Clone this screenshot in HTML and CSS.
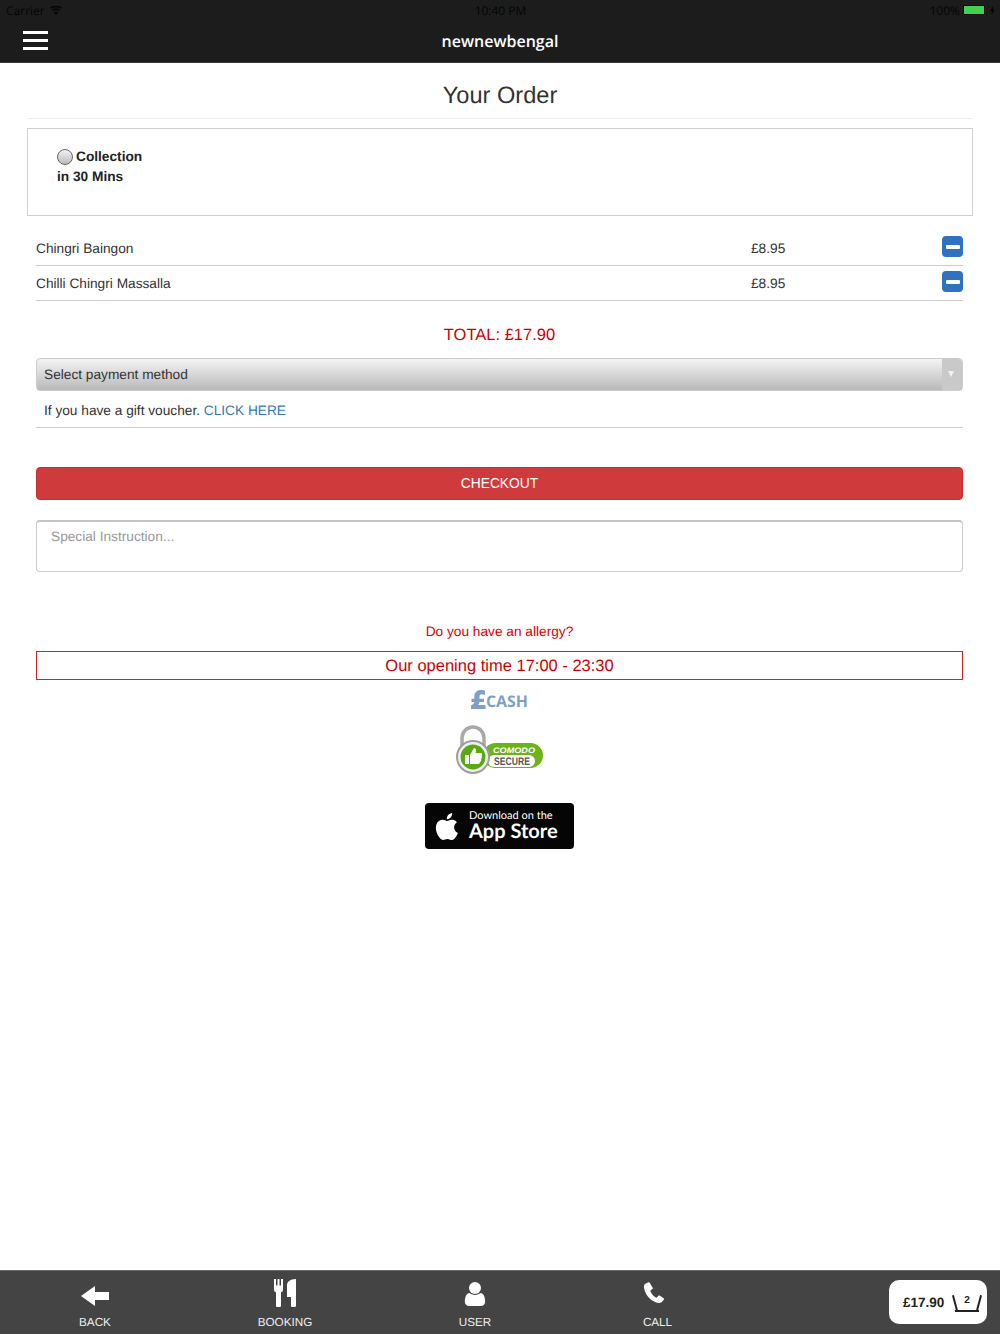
FILE: index.html
```html
<!DOCTYPE html>
<html lang="en">
  <head>
    <meta charset="UTF-8">
    <meta name="viewport" content="width=device-width, initial-scale=1.0">
    <title>Your Order</title>
    <link rel="stylesheet" href="styles.css">
  </head>
  <body>
    <div class="app">
      <div class="top">
        <div class="status">
          <div class="status-left">
            <span>Carrier</span>
            <svg class="wifi" width="12" height="9" viewBox="0 0 12 9">
              <path d="M6 9 3.900 6.400a3.200 3.200 0 0 1 4.200 0zM2.900 5.200 1.900 4a6.300 6.300 0 0 1 8.200 0l-1 1.200a4.800 4.800 0 0 0-6.200 0zM1 3 0 1.900a9.200 9.200 0 0 1 12 0L11 3a7.700 7.700 0 0 0-10 0z" fill="#050505"/>
            </svg>
          </div>
          <span class="status-time">10:40 PM</span>
          <div class="status-right">
            <span>100%</span>
            <span class="battery"></span>
            <svg class="bolt" width="5" height="9" viewBox="0 0 5 9"><path d="M3 0 0 5h2L1.500 9 5 3.600H3z" fill="#050505"/></svg>
          </div>
        </div>
        <div class="nav">
          <div class="burger"><span></span><span></span><span></span></div>
          <div class="brand">newnewbengal</div>
        </div>
      </div>

      <div class="main">
        <h1 class="title">Your Order</h1>

        <div class="collect">
          <div class="collect-line"><span class="radio"></span>Collection</div>
          <div class="collect-line">in 30 Mins</div>
        </div>

        <div class="content">
          <div class="item">
            <span class="item-name">Chingri Baingon</span>
            <span class="item-price">£8.95</span>
            <span class="minus"></span>
          </div>
          <div class="item">
            <span class="item-name">Chilli Chingri Massalla</span>
            <span class="item-price">£8.95</span>
            <span class="minus"></span>
          </div>

          <div class="total">TOTAL: £17.90</div>

          <div class="select">
            <span>Select payment method</span>
            <span class="select-arrow"></span>
          </div>
          <div class="voucher">If you have a gift voucher. <a href="#">CLICK HERE</a></div>

          <button class="checkout">CHECKOUT</button>

          <div class="instruction">Special Instruction...</div>

          <div class="allergy">Do you have an allergy?</div>
          <div class="opening">Our opening time 17:00 - 23:30</div>

          <div class="badges">
            <svg class="cash" width="60" height="22" viewBox="0 0 60 22">
              <path d="M1 20v-3.500c2-1 3-2 3.300-3.500H1.500V9.800h2.800V7.500C4.300 3 7.500 1 11 1c1.500 0 3 .3 4 .8v4.400c-1-.6-2-.9-3-.9-1.500 0-2.500.8-2.500 2.300v2.200H14V13H9.500c-.2 1.300-.8 2.400-1.600 3h7.600v4z" fill="#7f9fc4"/>
              <text x="16" y="18" class="cash-text" textLength="42" lengthAdjust="spacingAndGlyphs">CASH</text>
            </svg>

            <svg class="comodo" width="90" height="52" viewBox="0 0 90 52">
              <path d="M7 24V13a11 11 0 0 1 22 0v11" fill="none" stroke="#a9a9a9" stroke-width="3.500"/>
              <rect x="28" y="18" width="60" height="25" rx="12.500" fill="#6cb21a"/>
              <rect x="33" y="30" width="47" height="12" rx="6" fill="#fff"/>
              <text x="38" y="28" class="comodo-top" textLength="42" lengthAdjust="spacingAndGlyphs">COMODO</text>
              <text x="39" y="40" class="comodo-bottom" textLength="36" lengthAdjust="spacingAndGlyphs">SECURE</text>
              <circle cx="18" cy="32" r="17" fill="#9c9c9c"/>
              <circle cx="18" cy="32" r="15" fill="#f1f1f1"/>
              <circle cx="18" cy="32" r="12.500" fill="#5aa813"/>
              <path d="M10 30h4v9h-4zM15 30l4-7c2 0 2.500 2 1.500 5H26c1.500 0 1.500 2.500.5 3 .7 1 .5 2.500-.5 3 .5 1 .2 2.500-1 3 0 1-.7 2-2 2h-8z" fill="#fff"/>
            </svg>

            <div class="store">
              <svg width="28" height="33" viewBox="0 0 26 31">
                <path d="M21.600 16.400c0-3.200 2.600-4.700 2.700-4.800-1.500-2.200-3.800-2.500-4.600-2.500-2-.2-3.800 1.200-4.800 1.200s-2.500-1.200-4.200-1.100c-2.100 0-4.100 1.200-5.200 3.100-2.200 3.900-.6 9.600 1.600 12.700 1.100 1.500 2.300 3.200 4 3.200 1.600-.1 2.200-1 4.100-1s2.500 1 4.200 1c1.700-.1 2.800-1.600 3.900-3.100 1.200-1.800 1.700-3.500 1.800-3.600-.1 0-3.400-1.300-3.500-5.100zM18.400 6.900c.9-1.100 1.500-2.600 1.300-4.100-1.300.1-2.800.9-3.700 2-.8.9-1.500 2.500-1.300 3.900 1.400.1 2.800-.7 3.700-1.800z" fill="#fff"/>
              </svg>
              <div class="store-text">
                <span class="store-small">Download on the</span>
                <span class="store-big">App Store</span>
              </div>
            </div>
          </div>
        </div>
      </div>

      <div class="bottom">
        <a class="tab tab-back" href="#">
          <svg width="28" height="20" viewBox="0 0 28 20"><path d="M0 10 14 0v6h14v8H14v6z" fill="#fff"/></svg>
          <span>BACK</span>
        </a>
        <a class="tab tab-booking" href="#">
          <svg width="22" height="28" viewBox="0 0 22 28">
            <path d="M0 0h2v6.500h1.500V0h2v6.500H7V0h2v11c0 1.200-.7 2-2 2.300V27a1 1 0 0 1-1 1H3a1 1 0 0 1-1-1V13.300C.7 13 0 12.200 0 11zM22 0v27a1 1 0 0 1-1 1h-3a1 1 0 0 1-1-1v-9h-4V6c0-3 3-6 9-6z" fill="#fff"/>
          </svg>
          <span>BOOKING</span>
        </a>
        <a class="tab tab-user" href="#">
          <svg width="22" height="24" viewBox="0 0 22 26">
            <circle cx="11" cy="6.500" r="6.500" fill="#fff"/>
            <path d="M0 21c0-5 2-8.500 5-9 1.500 1.300 3.500 2 6 2s4.500-.7 6-2c3 .5 5 4 5 9 0 3-2 5-4.500 5h-13C2 26 0 24 0 21z" fill="#fff"/>
          </svg>
          <span>USER</span>
        </a>
        <a class="tab tab-call" href="#">
          <svg width="22" height="21" viewBox="0 0 22 23">
            <path d="M5 .3 1.500 2C.3 2.800-.2 4.500.1 6.500c.8 4.500 3 8.500 6.200 11.700 3 2.900 6.500 4.600 9.700 4.800 1.800.1 3.300-.6 4.300-1.900l1.500-2c.3-.5.200-1-.3-1.400l-4.300-2.800c-.5-.3-1-.2-1.400.2l-1.500 1.800c-.3.300-.7.400-1.100.2-2.500-1.300-5.200-4.300-6.100-7-.1-.4 0-.8.300-1l1.900-1.300c.4-.3.600-.8.400-1.300L6.300.8C6 .2 5.500 0 5 .3z" fill="#fff"/>
          </svg>
          <span>CALL</span>
        </a>
        <div class="cart">
          <span>£17.90</span>
          <div class="basket">2</div>
        </div>
      </div>
    </div>
  </body>
</html>
```

FILE: styles.css
```css
html, body {
  margin: 0;
  padding: 0;
}
body {
  background: #fff;
  font-family: 'Liberation Sans', Arial, sans-serif;
  color: #333;
  text-rendering: geometricPrecision;
}
a {
  text-decoration: none;
}
.app {
  display: flex;
  flex-direction: column;
  height: 1334px;
  overflow: hidden;
}

/* top bar */
.top {
  background: #1c1c1c;
  border-bottom: 1px solid #3a3a3a;
  height: 62px;
  flex: none;
}
.status {
  display: grid;
  grid-template-columns: 1fr auto 1fr;
  align-items: center;
  height: 20px;
  padding: 0 5px 0 6px;
  font-family: 'Open Sans', 'Liberation Sans', sans-serif;
  font-size: 12px;
  color: #050505;
}
.status-left {
  display: flex;
  align-items: center;
  gap: 5px;
}
.status-right {
  display: flex;
  align-items: center;
  justify-content: flex-end;
  gap: 3px;
}
.battery {
  width: 20px;
  height: 8px;
  background: #3fd24f;
  border: 1px solid #050505;
  border-radius: 1px;
}
.bolt {
  margin-left: 2px;
}
.nav {
  display: flex;
  align-items: center;
  height: 42px;
  padding-left: 23px;
}
.burger {
  display: flex;
  flex-direction: column;
  gap: 5px;
  width: 25px;
  margin-top: -2px;
}
.burger span {
  height: 3px;
  background: #fff;
}
.brand {
  flex: 1;
  margin-left: -48px;
  text-align: center;
  color: #fff;
  font-size: 16px;
  font-weight: 600;
  font-family: 'Open Sans', 'Liberation Sans', sans-serif;
}

/* order */
.main {
  flex: 1;
  padding: 0 27px;
}
.title {
  margin: 0 1px;
  height: 56px;
  line-height: 66px;
  box-sizing: border-box;
  border-bottom: 1px solid #eee;
  font-size: 23.600px;
  font-weight: 400;
  text-align: center;
  color: #333;
}
.collect {
  margin-top: 9px;
  height: 88px;
  box-sizing: border-box;
  border: 1px solid #d0d0d0;
  padding: 18px 29px;
  font-size: 13.700px;
  font-weight: 700;
  line-height: 20px;
  color: #222;
}
.collect-line {
  display: flex;
  align-items: center;
}
.radio {
  width: 14px;
  height: 14px;
  margin-right: 3px;
  border: 1px solid #666;
  border-radius: 50%;
  background: linear-gradient(#f2f2f2, #bbb);
}
.content {
  padding: 0 10px 0 9px;
}
.item {
  display: flex;
  align-items: center;
  height: 35px;
  box-sizing: border-box;
  border-bottom: 1px solid #ccc;
  font-size: 13.700px;
}
.item:first-child {
  margin-top: 15px;
}
.item-name {
  flex: 1;
}
.item-price {
  width: 36px;
  margin-right: 155px;
}
.minus {
  display: flex;
  align-items: center;
  justify-content: center;
  width: 21px;
  height: 21px;
  margin-top: -3px;
  border-radius: 4px;
  background: #3072bd;
}
.minus::before {
  content: '';
  width: 14px;
  height: 4px;
  border-radius: 1px;
  background: #fff;
}
.total {
  margin-top: 24px;
  font-size: 16.500px;
  line-height: 20px;
  text-align: center;
  color: #c00;
}
.select {
  display: flex;
  justify-content: space-between;
  margin-top: 13px;
  height: 33px;
  box-sizing: border-box;
  border: 1px solid #ccc;
  border-radius: 4px;
  padding-left: 7px;
  background: linear-gradient(#f4f4f4, #b9b9b9);
  font-size: 13.700px;
  line-height: 31px;
  color: #333;
}
.select-arrow {
  position: relative;
  width: 20px;
  background: #c9c9c9;
  border-radius: 0 4px 4px 0;
}
.select-arrow::before {
  content: '';
  position: absolute;
  left: 6px;
  top: 12px;
  border-style: solid;
  border-width: 6px 3.500px 0;
  border-color: #f2f2f2 transparent transparent;
}
.voucher {
  height: 37px;
  box-sizing: border-box;
  border-bottom: 1px solid #ccc;
  padding-left: 8px;
  font-size: 13.700px;
  line-height: 39px;
  color: #333;
}
.voucher a {
  color: #337ab7;
}
.checkout {
  display: block;
  width: 100%;
  height: 33px;
  margin-top: 39px;
  border: 1px solid #c9302c;
  border-radius: 4px;
  background: #cf3a3c;
  color: #fff;
  font-family: inherit;
  font-size: 13.800px;
}
.instruction {
  margin-top: 20px;
  height: 52px;
  box-sizing: border-box;
  border: 1px solid #ccc;
  border-top: 2px solid #c4c4c4;
  border-radius: 4px;
  padding: 5px 14px;
  font-size: 13.700px;
  line-height: 20px;
  color: #999;
}
.allergy {
  margin-top: 50px;
  font-size: 13.700px;
  line-height: 20px;
  text-align: center;
  color: #d00;
}
.opening {
  margin-top: 9px;
  height: 29px;
  box-sizing: border-box;
  border: 1px solid #d0202a;
  font-size: 16.500px;
  line-height: 29px;
  text-align: center;
  color: #c00;
}
.badges {
  display: flex;
  flex-direction: column;
  align-items: center;
  margin-top: 9px;
}
.cash-text {
  font-family: 'Open Sans', 'Liberation Sans', sans-serif;
  font-size: 16px;
  font-weight: 700;
  fill: #7f9fc4;
}
.comodo {
  margin-top: 14px;
}
.comodo-top {
  font-family: 'Liberation Sans', sans-serif;
  font-size: 8px;
  font-weight: 700;
  font-style: italic;
  fill: #fff;
}
.comodo-bottom {
  font-family: 'Liberation Sans', sans-serif;
  font-size: 11px;
  font-weight: 700;
  fill: #555;
}
.store {
  display: flex;
  align-items: center;
  gap: 10px;
  width: 149px;
  height: 46px;
  margin-top: 26px;
  padding-left: 6px;
  box-sizing: border-box;
  border-radius: 4px;
  background: #050505;
  color: #fff;
}
.store-text {
  display: flex;
  flex-direction: column;
  margin-top: -3px;
  font-family: Lato, 'Liberation Sans', sans-serif;
}
.store-small {
  font-size: 11px;
  line-height: 13px;
}
.store-big {
  font-size: 20px;
  font-weight: 700;
  line-height: 19px;
}

/* bottom bar */
.bottom {
  display: flex;
  flex: none;
  height: 64px;
  box-sizing: border-box;
  border-top: 1px solid #666;
  background: #444;
}
.tab {
  display: flex;
  flex-direction: column;
  align-items: center;
  width: 190px;
  height: 63px;
  color: #eee;
  font-size: 11.700px;
}
.tab svg {
  display: block;
}
.tab span {
  margin-top: auto;
  line-height: 14px;
  margin-bottom: 4px;
}
.tab-back svg {
  margin-top: 15px;
}
.tab-booking svg {
  margin-top: 8px;
}
.tab-user svg {
  margin-top: 11px;
}
.tab-call {
  width: 175px;
}
.tab-call svg {
  margin: 11px 8px 0 0;
}
.cart {
  display: flex;
  align-items: center;
  justify-content: space-between;
  width: 98px;
  height: 44px;
  margin: 9px 13px 0 auto;
  padding: 0 8px 0 14px;
  box-sizing: border-box;
  border-radius: 10px;
  background: #fff;
  color: #222;
  font-size: 13.500px;
  font-weight: 700;
}
.basket {
  position: relative;
  width: 24px;
  height: 14px;
  margin-top: 3px;
  border-bottom: 2px solid #222;
  text-align: center;
  font-size: 10px;
  line-height: 10px;
}
.basket::before, .basket::after {
  content: '';
  position: absolute;
  top: -1px;
  width: 2px;
  height: 16px;
  background: #222;
}
.basket::before {
  left: -1px;
  transform: rotate(-15deg);
}
.basket::after {
  right: -1px;
  transform: rotate(15deg);
}
```
